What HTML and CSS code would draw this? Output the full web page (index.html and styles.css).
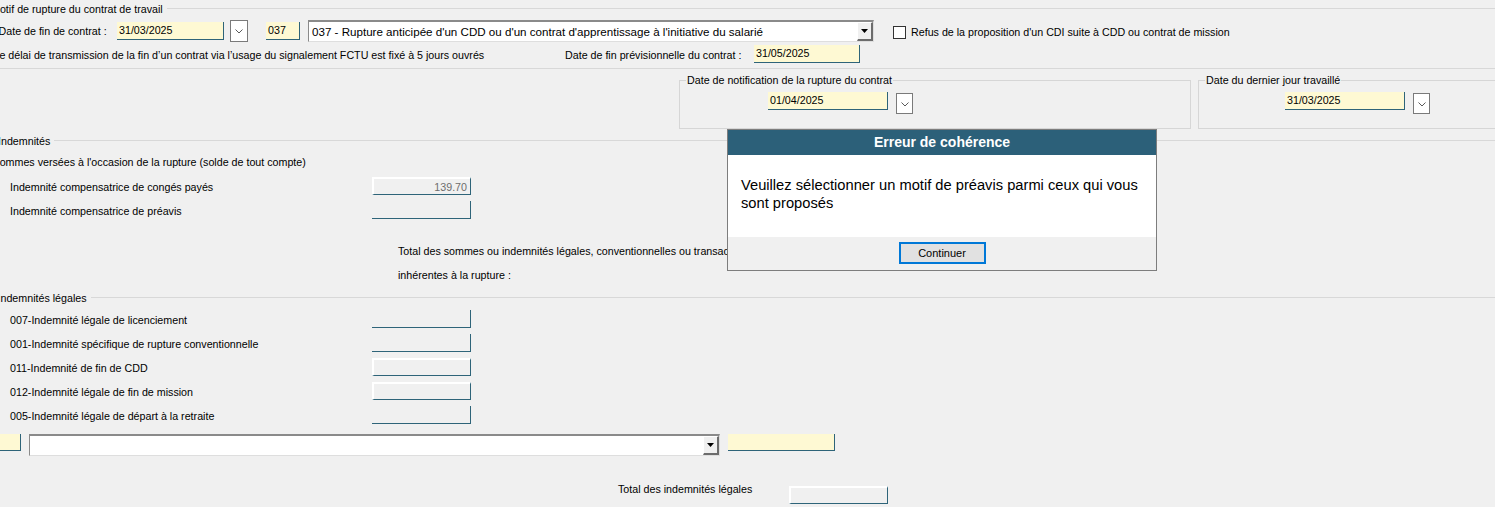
FILE: index.html
```html
<!DOCTYPE html>
<html lang="fr">
<head>
    <meta charset="UTF-8">
    <title>Rupture du contrat</title>
    <link rel="stylesheet" href="styles.css">
</head>
<body>

    <div class="ecran">

        <!--MOTIF DE RUPTURE-->
        <div class="titre titre-motif"><span>Motif de rupture du contrat de travail</span></div>

        <div class="ligne l-fin">
            <span class="lib-fin">Date de fin de contrat :</span>
            <div class="saisie date">31/03/2025</div>
            <div class="btn-cal">
                <svg width="8" height="5" viewBox="0 0 8 5"><polyline points="0.5,0.5 4,4 7.5,0.5" fill="none" stroke="#5a5a5a" stroke-width="1"/></svg>
            </div>
            <div class="saisie code">037</div>
            <div class="combo combo-motif">
                <span class="combo-txt">037 - Rupture anticipée d'un CDD ou d'un contrat d'apprentissage à l'initiative du salarié</span>
                <span class="combo-fl"><svg width="7" height="4" viewBox="0 0 7 4"><polygon points="0,0 7,0 3.5,4" fill="#000"/></svg></span>
            </div>
            <span class="case"></span>
            <span class="lib-refus">Refus de la proposition d'un CDI suite à CDD ou contrat de mission</span>
        </div>

        <div class="ligne l-delai">
            <span class="lib-delai">Le délai de transmission de la fin d’un contrat via l’usage du signalement FCTU est fixé à 5 jours ouvrés</span>
            <span class="lib-prev">Date de fin prévisionnelle du contrat :</span>
            <div class="saisie date-prev">31/05/2025</div>
        </div>

        <div class="sep"></div>

        <!--DATES-->
        <div class="dates">
            <fieldset class="groupe g-notif">
                <legend>Date de notification de la rupture du contrat</legend>
                <div class="groupe-in">
                    <div class="saisie date-g">01/04/2025</div>
                    <div class="btn-cal btn-g">
                        <svg width="8" height="5" viewBox="0 0 8 5"><polyline points="0.5,0.5 4,4 7.5,0.5" fill="none" stroke="#5a5a5a" stroke-width="1"/></svg>
                    </div>
                </div>
            </fieldset>
            <fieldset class="groupe g-dernier">
                <legend>Date du dernier jour travaillé</legend>
                <div class="groupe-in">
                    <div class="saisie date-g">31/03/2025</div>
                    <div class="btn-cal btn-g">
                        <svg width="8" height="5" viewBox="0 0 8 5"><polyline points="0.5,0.5 4,4 7.5,0.5" fill="none" stroke="#5a5a5a" stroke-width="1"/></svg>
                    </div>
                </div>
            </fieldset>
        </div>

        <!--INDEMNITES-->
        <div class="titre titre-ind"><span>Indemnités</span></div>
        <div class="sous">Sommes versées à l'occasion de la rupture (solde de tout compte)</div>

        <div class="champs">
            <div class="rangee">
                <span class="lib">Indemnité compensatrice de congés payés</span>
                <div class="montant plein">139.70</div>
            </div>
            <div class="rangee">
                <span class="lib">Indemnité compensatrice de préavis</span>
                <div class="montant"></div>
            </div>
        </div>

        <div class="total-txt">
            Total des sommes ou indemnités légales, conventionnelles ou transactionnelles<br>
            inhérentes à la rupture :
        </div>

        <!--INDEMNITES LEGALES-->
        <div class="titre titre-leg"><span>Indemnités légales</span></div>

        <div class="champs champs-leg">
            <div class="rangee">
                <span class="lib">007-Indemnité légale de licenciement</span>
                <div class="montant"></div>
            </div>
            <div class="rangee">
                <span class="lib">001-Indemnité spécifique de rupture conventionnelle</span>
                <div class="montant"></div>
            </div>
            <div class="rangee">
                <span class="lib">011-Indemnité de fin de CDD</span>
                <div class="montant plein"></div>
            </div>
            <div class="rangee">
                <span class="lib">012-Indemnité légale de fin de mission</span>
                <div class="montant plein"></div>
            </div>
            <div class="rangee">
                <span class="lib">005-Indemnité légale de départ à la retraite</span>
                <div class="montant"></div>
            </div>
        </div>

        <div class="bas">
            <div class="saisie petit"></div>
            <div class="combo combo-bas">
                <span class="combo-txt"></span>
                <span class="combo-fl"><svg width="7" height="4" viewBox="0 0 7 4"><polygon points="0,0 7,0 3.5,4" fill="#000"/></svg></span>
            </div>
            <div class="saisie autre"></div>
        </div>

        <div class="tot-leg">
            <span class="lib-tot">Total des indemnités légales</span>
            <div class="montant plein"></div>
        </div>
    </div>

    <!--MODAL ERREUR-->
    <div class="modale">
        <div class="modale-tete">Erreur de cohérence</div>
        <div class="modale-corps">Veuillez sélectionner un motif de préavis parmi ceux qui vous sont proposés</div>
        <div class="modale-pied">
            <div class="btn-continuer">Continuer</div>
        </div>
    </div>

</body>
</html>
```

FILE: styles.css
```css
/* ---------- BASE ---------- */
body {
    margin:0;
    width:1495px;
    height:507px;
    overflow:hidden;
    position:relative;
    background:#f0f0f0;
    font-family:"Liberation Sans", Arial, sans-serif;
    font-size:10.7px;
    color:#000;
}

.ecran { margin-left:-10px; }

/* ---------- TITRES DE SECTION ---------- */
.titre {
    display:flex;
    align-items:center;
    height:16px;
    line-height:16px;
    white-space:nowrap;
}

.titre span { padding-top:1px; }

.titre::after {
    content:"";
    flex:1;
    border-top:1px solid #d8d8d8;
    margin-left:4px;
}

.titre-motif { padding-left:1px; }
.titre-ind { padding-left:8px; margin-top:3px; }
.titre-leg { padding-left:7.5px; margin-top:2px; }

/* ---------- LIGNES DU HAUT ---------- */
.ligne {
    display:flex;
    align-items:center;
    white-space:nowrap;
}

.l-fin { height:23px; margin-top:3px; padding-left:8.5px; }
.lib-fin { width:118.5px; }

.l-delai { height:20px; margin-top:2px; padding-left:3.5px; }
.lib-delai { width:571.5px; padding-top:1px; }
.lib-prev { width:189px; padding-top:1px; }

/* champ jaune */
.saisie {
    box-sizing:border-box;
    height:18px;
    line-height:17px;
    padding-left:2px;
    background:#fef9d3;
    border-right:1px solid #2e6479;
    border-bottom:1px solid #2e6479;
}

.date { width:107px; }
.code { width:34px; margin-left:18px; }
.date-prev { width:106px; }

/* bouton calendrier */
.btn-cal {
    box-sizing:border-box;
    width:18px;
    height:22px;
    margin-left:6px;
    background:#fff;
    border:1px solid #7a7a7a;
    display:flex;
    align-items:center;
    justify-content:center;
}

.btn-cal svg { margin-top:2px; }

/* liste déroulante */
.combo {
    box-sizing:border-box;
    height:22px;
    display:flex;
    background:#fff;
    border-top:2px solid #8a8a8a;
    border-left:1px solid #8a8a8a;
    border-right:1px solid #dedede;
    border-bottom:1px solid #dedede;
}

.combo-motif { width:566px; margin-left:8px; }

.combo-txt {
    flex:1;
    padding-left:3px;
    line-height:19px;
    font-size:11.6px;
    overflow:hidden;
}

.combo-fl {
    box-sizing:border-box;
    width:16px;
    height:19px;
    background:#f0f0f0;
    border-top:1px solid #fff;
    border-left:1px solid #fff;
    border-right:2px solid #6c6c6c;
    border-bottom:2px solid #6c6c6c;
    display:flex;
    align-items:center;
    justify-content:center;
}

.case {
    box-sizing:border-box;
    width:13px;
    height:13px;
    margin-left:19px;
    margin-top:3px;
    background:#fff;
    border:1px solid #333;
}

.lib-refus { margin-left:5px; margin-top:3px; }

.sep {
    margin-top:4px;
    border-top:1px solid #d8d8d8;
}

/* ---------- GROUPES DE DATES ---------- */
.dates {
    display:flex;
    gap:7px;
    margin-top:4px;
    padding-left:689px;
}

.groupe {
    flex:none;
    box-sizing:border-box;
    min-width:0;
    margin:0;
    padding:0;
    border:1px solid #d6d6d6;
}

.groupe legend {
    padding:0 1px;
    margin-left:6px;
    line-height:14px;
}

.g-notif { width:512px; }
.g-dernier { width:400px; }

.groupe-in {
    display:flex;
    align-items:flex-start;
    padding:5px 0 14px 88px;
}

.g-dernier .groupe-in { padding-left:86px; }

.date-g { width:120px; }
.btn-g { width:17px; height:21px; margin-left:8px; margin-top:1px; }

/* ---------- INDEMNITES ---------- */
.sous {
    line-height:16px;
    margin-top:5px;
    padding-top:1px;
    padding-left:2.5px;
}

.champs { margin-top:4px; }
.champs-leg { margin-top:2px; }

.rangee {
    display:flex;
    align-items:center;
    height:24px;
    padding-left:20px;
    white-space:nowrap;
}

.rangee .lib { width:362px; padding-top:2px; }

.montant {
    box-sizing:border-box;
    width:99px;
    height:18px;
    padding-right:3px;
    line-height:16px;
    text-align:right;
    color:#6d6d6d;
    border-right:1px solid #2e6479;
    border-bottom:1px solid #2e6479;
}

.montant.plein {
    border-top:2px solid #fff;
    border-left:2px solid #fff;
}

.total-txt {
    margin-top:17px;
    padding-left:408px;
    line-height:24px;
    white-space:nowrap;
}

/* ---------- LIGNE DU BAS ---------- */
.bas {
    display:flex;
    align-items:flex-start;
    margin-top:7px;
}

.petit { width:31px; height:17px; }
.combo-bas { width:691px; margin-left:8px; }
.autre { width:107px; height:17px; margin-left:8px; }

.tot-leg {
    display:flex;
    align-items:flex-start;
    margin-top:25px;
    padding-left:628px;
}

.lib-tot { width:171px; line-height:16px; }
.tot-leg .montant { margin-top:5px; }

/* ---------- FENETRE D'ERREUR ---------- */
.modale {
    position:absolute;
    left:727px;
    top:129px;
    width:430px;
    height:142px;
    box-sizing:border-box;
    display:flex;
    flex-direction:column;
    background:#f0f0f0;
    border:1px solid #7d7d7d;
}

.modale-tete {
    height:25px;
    line-height:24px;
    text-align:center;
    background:#2c6079;
    color:#fff;
    font-weight:bold;
    font-size:14px;
}

.modale-corps {
    box-sizing:border-box;
    height:82px;
    padding:21px 13px 0;
    background:#fff;
    font-size:14.7px;
    line-height:18px;
}

.modale-pied {
    flex:1;
    display:flex;
    justify-content:center;
    padding-top:5px;
}

.btn-continuer {
    box-sizing:border-box;
    width:87px;
    height:22px;
    line-height:18px;
    text-align:center;
    font-size:11px;
    background:#e1e1e1;
    border:2px solid #0078d7;
}
```
